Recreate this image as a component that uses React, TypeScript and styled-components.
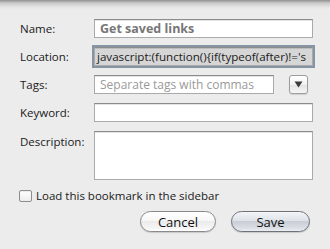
import { createGlobalStyle, styled } from 'styled-components';

const GlobalStyle = createGlobalStyle`
  html, body {
    margin: 0;
    padding: 0;
    background: #ececec;
  }
  * {
    box-sizing: border-box;
  }
`;

const Sheet = styled.div`
  width: 330px;
  height: 249px;
  overflow: hidden;
  background: linear-gradient(#8f8f8f 0, #c9c9c9 3px, #e4e4e4 7px, #ececec 10px, #ececec 100%);
  font-family: 'Open Sans', 'DejaVu Sans', sans-serif;
  color: #1a1a1a;
  padding: 19px 17px 0 20px;
`;

const Form = styled.div`
  display: grid;
  grid-template-columns: 74px 1fr;
  row-gap: 9px;
`;

const Label = styled.label<{ $top?: boolean }>`
  font-size: 11.5px;
  line-height: 19px;
  align-self: ${(p) => (p.$top ? 'start' : 'center')};
  padding-top: ${(p) => (p.$top ? '1px' : '0')};
  white-space: nowrap;
`;

const Field = styled.div<{ $focus?: boolean; $bold?: boolean; $muted?: boolean }>`
  height: 19px;
  background: ${(p) => (p.$focus ? '#d6d6d6' : '#fff')};
  border: 1px solid #aaa;
  border-top-color: #8c8c8c;
  box-shadow: ${(p) =>
    p.$focus ? '0 0 0 2px #8595a3, inset 0 1px 0 #bdbdbd' : 'inset 0 1px 0 #e4e4e4'};
  padding: 0 ${(p) => (p.$focus ? '2px' : '5px')};
  font-size: ${(p) => (p.$bold ? '12.5px' : p.$focus ? '11.6px' : '12px')};
  font-weight: ${(p) => (p.$bold ? 700 : 400)};
  color: ${(p) => (p.$muted ? '#9a9a9a' : p.$bold ? '#777' : '#1a1a1a')};
  line-height: 17px;
  white-space: nowrap;
  overflow: hidden;
  flex: 1;
`;

const TextArea = styled.div`
  height: 49px;
  background: #fff;
  border: 1px solid #aaa;
  border-top-color: #8c8c8c;
  box-shadow: inset 0 1px 0 #e4e4e4;
`;

const TagsRow = styled.div`
  display: flex;
  align-items: center;
  gap: 15px;
  padding-right: 5px;
`;

const MenuButton = styled.div`
  width: 19px;
  height: 19px;
  border: 1px solid #9d9d9d;
  border-radius: 3px;
  background: linear-gradient(#ffffff, #f2f2f2 50%, #e2e2e2 51%, #f6f6f6);
  box-shadow: 0 1px 1px rgba(0, 0, 0, 0.12);
  display: flex;
  align-items: center;
  justify-content: center;
`;

const CheckRow = styled.label`
  display: flex;
  align-items: center;
  gap: 4px;
  margin: 9px 0 0 -1px;
  font-size: 11.5px;
  line-height: 14px;
`;

const Box = styled.span`
  width: 13px;
  height: 12px;
  border: 1px solid #8e8e8e;
  border-radius: 2px;
  background: linear-gradient(#ffffff, #ececec);
  box-shadow: inset 0 1px 1px rgba(0, 0, 0, 0.08);
`;

const Buttons = styled.div`
  display: flex;
  justify-content: flex-end;
  gap: 15px;
  margin-top: 8px;
  padding-right: 3px;
`;

const PillButton = styled.button<{ $width: number; $primary?: boolean }>`
  width: ${(p) => p.$width}px;
  height: 21px;
  border-radius: 11px;
  border: 1px solid ${(p) => (p.$primary ? '#6f7279' : '#8a8a8a')};
  background: ${(p) =>
    p.$primary
      ? 'linear-gradient(#f3f5f8, #dfe3e9 45%, #c9ced6 50%, #d8dce2 80%, #eaedf1)'
      : 'linear-gradient(#ffffff, #f7f7f7 45%, #ebebeb 50%, #f5f5f5 85%, #ffffff)'};
  box-shadow: 0 1px 1px rgba(0, 0, 0, 0.15);
  font-family: 'Open Sans', 'DejaVu Sans', sans-serif;
  font-size: 13px;
  color: #111;
  padding: 0;
  line-height: 18px;
`;

export default function App() {
  return (
    <>
      <GlobalStyle />
      <Sheet>
        <Form>
          <Label>Name:</Label>
          <Field $bold>Get saved links</Field>

          <Label>Location:</Label>
          <Field $focus>javascript:(function(){'{'}if(typeof(after)!='s</Field>

          <Label>Tags:</Label>
          <TagsRow>
            <Field $muted>Separate tags with commas</Field>
            <MenuButton>
              <svg width="9" height="7" viewBox="0 0 9 7">
                <path d="M0.5 0.5 L8.5 0.5 L4.5 6.5 Z" fill="#3a3a3a" />
              </svg>
            </MenuButton>
          </TagsRow>

          <Label>Keyword:</Label>
          <Field />

          <Label $top>Description:</Label>
          <TextArea />
        </Form>

        <CheckRow>
          <Box />
          Load this bookmark in the sidebar
        </CheckRow>

        <Buttons>
          <PillButton $width={76}>Cancel</PillButton>
          <PillButton $width={79} $primary>
            Save
          </PillButton>
        </Buttons>
      </Sheet>
    </>
  );
}
